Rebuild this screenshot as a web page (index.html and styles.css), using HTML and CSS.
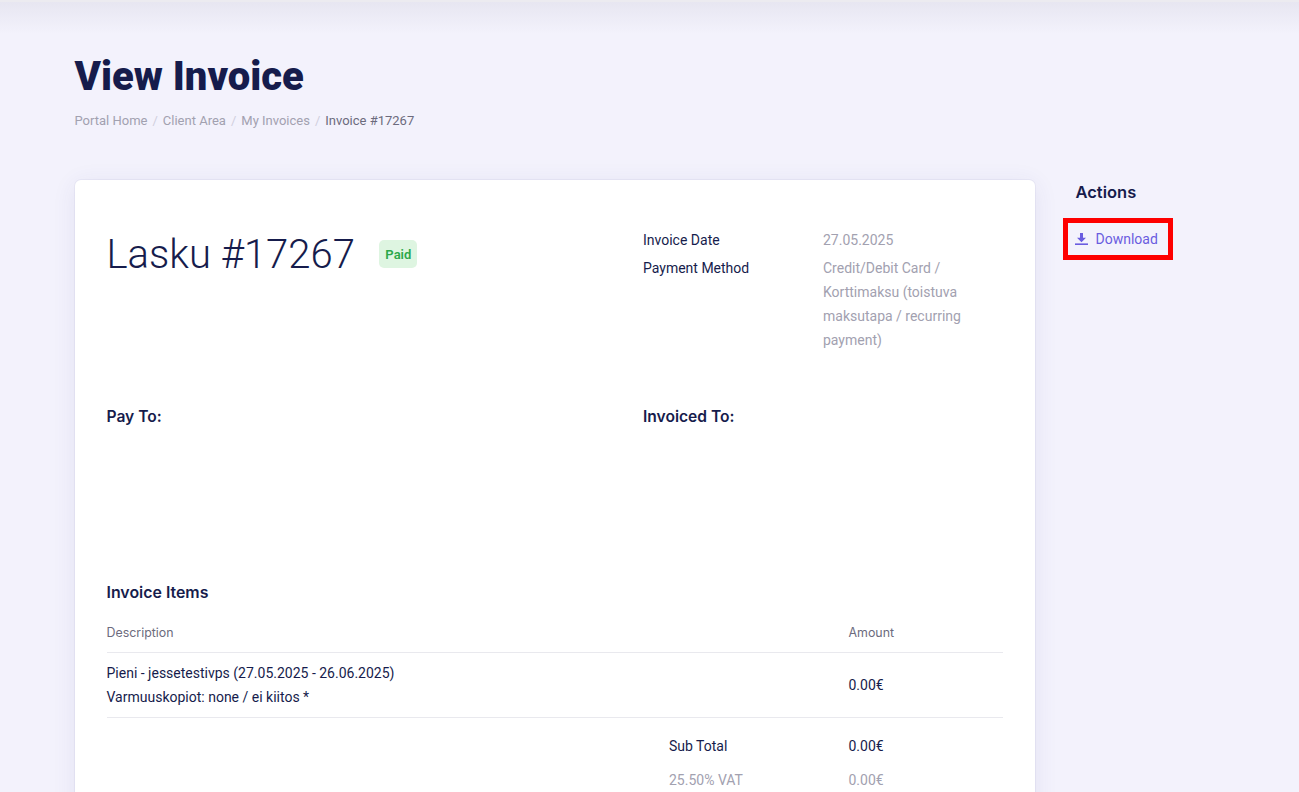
FILE: index.html
```html
<!DOCTYPE html>
<html lang="en">
<head>
<meta charset="utf-8">
<title>View Invoice</title>
<link rel="stylesheet" href="styles.css">
</head>
<body>
<div class="topbar"></div>
<main class="page">
  <header class="page-head">
    <h1>View Invoice</h1>
    <nav class="crumbs">
      <a>Portal Home</a><i>/</i><a>Client Area</a><i>/</i><a>My Invoices</a><i>/</i><span>Invoice #17267</span>
    </nav>
  </header>
  <div class="columns">
    <section class="card">
      <div class="top-grid">
        <div class="title-row">
          <h2>Lasku #17267</h2>
          <span class="badge">Paid</span>
        </div>
        <dl class="meta">
          <dt>Invoice Date</dt><dd>27.05.2025</dd>
          <dt>Payment Method</dt><dd>Credit/Debit Card / Korttimaksu (toistuva maksutapa / recurring payment)</dd>
        </dl>
      </div>
      <div class="parties">
        <h3>Pay To:</h3>
        <h3>Invoiced To:</h3>
      </div>
      <h4>Invoice Items</h4>
      <div class="row head"><div>Description</div><div>Amount</div></div>
      <div class="row item">
        <div>Pieni - jessetestivps (27.05.2025 - 26.06.2025)<br>Varmuuskopiot: none / ei kiitos *</div>
        <div>0.00€</div>
      </div>
      <div class="totals">
        <div class="total"><span>Sub Total</span><span>0.00€</span></div>
        <div class="total muted"><span>25.50% VAT</span><span>0.00€</span></div>
      </div>
    </section>
    <aside class="side">
      <h5>Actions</h5>
      <a class="action">
        <svg width="13" height="12" viewBox="0 0 13 12" aria-hidden="true"><path d="M5 0h3v4.700h3L6.500 9.300 2 4.700h3z" fill="currentColor"/><rect x="0" y="10.400" width="13" height="1.600" fill="currentColor"/></svg>
        Download
      </a>
    </aside>
  </div>
</main>
</body>
</html>
```
FILE: styles.css
```css
* { box-sizing: border-box; }
html, body { margin: 0; height: 792px; overflow: hidden; }
body {
  background: #f3f2fc;
  color: #161c4c;
  font-family: Roboto, "Liberation Sans", sans-serif;
  font-size: 14px;
  line-height: 24px;
}
.topbar {
  height: 34px;
  margin-bottom: -34px;
  border-top: 2px solid #ecebf0;
  background: linear-gradient(#e7e6f1, #f3f2fc);
}
.page { padding: 0 0 0 74.5px; position: relative; }
.page-head { padding-top: 53px; height: 180px; }
h1 {
  margin: 0;
  font-size: 40px;
  line-height: 48px;
  font-weight: 900;
  color: #161c4c;
}
.crumbs {
  margin-top: 8px;
  font-size: 13px;
  line-height: 24px;
  color: #a2a1b0;
  display: flex;
}
.crumbs i { font-style: normal; color: #d0cfdc; padding: 0 5px; }
.crumbs span { color: #6c6b7d; }
.columns { display: flex; align-items: flex-start; }
.card {
  width: 960.5px;
  height: 800px;
  flex: none;
  padding: 32px;
  background: #fff;
  border-radius: 6px;
  box-shadow: 0 0 0 1px rgba(90, 80, 150, .06), 0 4px 24px rgba(60, 50, 140, .09);
}
.top-grid { display: flex; height: 193px; align-items: flex-start; }
.title-row { width: 536.5px; display: flex; align-items: center; height: 48px; margin-top: 19px; flex: none; }
h2 {
  margin: 0;
  font-size: 40px;
  line-height: 48px;
  font-weight: 300;
  color: #161c4c;
}
.badge {
  margin-left: 24.5px;
  margin-top: -2px;
  height: 28px;
  width: 38px;
  text-align: center;
  background: #def5e1;
  color: #2ba84a;
  border-radius: 5px;
  font-size: 13px;
  font-weight: 600;
  line-height: 29px;
}
.meta { margin: 16px 0 0; display: grid; grid-template-columns: 180px 160px; row-gap: 4px; }
.meta dt { color: #161c4c; }
.meta dd { margin: 0; color: #a2a1b0; }
.parties { display: flex; height: 176px; }
h3 {
  margin: 0;
  width: 536.5px;
  font-size: 15.6px;
  line-height: 24px;
  font-weight: 600;
  font-family: Inter, Roboto, sans-serif;
}
h3 + h3 { width: auto; }
h4 {
  margin: 0;
  font-size: 15.9px;
  line-height: 24px;
  font-weight: 600;
  font-family: Inter, Roboto, sans-serif;
}
.row { display: grid; grid-template-columns: 742px 1fr; align-items: center; border-bottom: 1px solid #e9e9ee; }
.head { height: 48px; padding-top: 8px; font-size: 12.4px; color: #6c6b7d; font-family: Inter, Roboto, sans-serif; }
.item { height: 65px; }
.totals { padding: 16px 0 0 562.5px; }
.total { display: grid; grid-template-columns: 179.5px 1fr; height: 24px; margin-bottom: 10px; }
.muted { color: #a2a1b0; }
.side { padding: 0 0 0 40.5px; }
h5 {
  margin: 0;
  font-size: 16.5px;
  line-height: 24px;
  font-weight: 600;
  font-family: Inter, Roboto, sans-serif;
}
.action {
  margin: 14px 0 0 -12.5px;
  width: 110px;
  height: 42px;
  display: flex;
  align-items: center;
  gap: 7.5px;
  padding-left: 7px;
  border: 5px solid #fe0000;
  color: #6a5ce0;
}
```
